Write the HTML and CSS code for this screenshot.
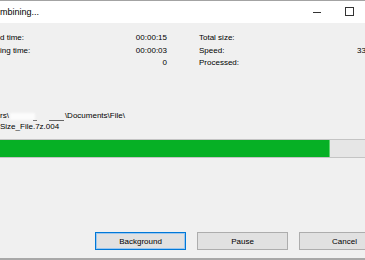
FILE: index.html
```html
<!DOCTYPE html>
<html lang="en">
<head>
    <meta charset="UTF-8">
    <meta name="viewport" content="width=device-width, initial-scale=1.0">
    <title>Combining...</title>
    <link rel="stylesheet" href="styles.css">
</head>
<body>
    <div class="window">
        <div class="titlebar">
            <span class="title">mbining...</span>
            <div class="controls">
                <span class="min"></span>
                <span class="max"></span>
            </div>
        </div>

        <div class="content">
            <div class="stats">
                <span>d time:</span>
                <span class="value">00:00:15</span>
                <span></span>
                <span>Total size:</span>
                <span></span>

                <span>ing time:</span>
                <span class="value">00:00:03</span>
                <span></span>
                <span>Speed:</span>
                <span>33</span>

                <span></span>
                <span class="value">0</span>
                <span></span>
                <span>Processed:</span>
                <span></span>
            </div>

            <div class="path">
                <div>rs\<span class="redact"><span class="blur"></span><span class="lines"></span></span>\Documents\File\</div>
                <div>Size_File.7z.004</div>
            </div>

            <div class="progress">
                <div class="fill"></div>
            </div>

            <div class="buttons">
                <button class="btn default">Background</button>
                <button class="btn">Pause</button>
                <button class="btn">Cancel</button>
            </div>
        </div>
    </div>
</body>
</html>
```

FILE: styles.css
```css
html, body {
    margin: 0;
    padding: 0;
}
body {
    width: 365px;
    height: 260px;
    overflow: hidden;
    font-family: "Liberation Sans", Arial, sans-serif;
    font-size: 8px;
    color: #000;
    background-color: #f0f0f0;
}
.window {
    border-top: 1px solid #a3a3a3;
    height: 259px;
    display: flex;
    flex-direction: column;
}
.titlebar {
    height: 22px;
    background-color: #fff;
    display: flex;
    align-items: center;
}
.title {
    flex: 1;
    font-size: 9px;
}
.controls {
    display: flex;
    align-items: center;
    gap: 24px;
    margin-right: 11px;
}
.min {
    width: 8px;
    height: 1px;
    background-color: #333;
}
.max {
    width: 7px;
    height: 7px;
    border: 1px solid #333;
    margin-bottom: 1px;
}
.content {
    flex: 1;
    background-color: #f0f0f0;
    border-bottom: 2px solid #a8a8a8;
    display: flex;
    flex-direction: column;
    overflow: hidden;
}
.stats {
    display: grid;
    grid-template-columns: 120px 47px 32px 158px 8px;
    line-height: 12.5px;
    padding-top: 9px;
    white-space: nowrap;
}
.stats .value {
    text-align: right;
}
.path {
    margin-top: 41px;
    line-height: 10.5px;
    white-space: nowrap;
}
.redact {
    display: inline-block;
    width: 56px;
    height: 9px;
    vertical-align: -2px;
    position: relative;
}
.blur {
    display: inline-block;
    width: 25px;
    height: 7px;
    margin-left: 1px;
    background-color: #fcfcfc;
    filter: blur(1px);
}
.lines {
    position: absolute;
    left: 24px;
    right: 0;
    bottom: 1px;
    height: 1px;
    background: linear-gradient(to right, #777 0, #777 4px, transparent 4px, transparent 16px, #666 16px, #666 31px, transparent 31px);
}
.progress {
    margin-top: 7px;
    height: 17px;
    border-top: 1px solid #c4c4c4;
    border-bottom: 1px solid #c4c4c4;
    background-color: #e6e6e6;
    display: flex;
}
.fill {
    width: 329px;
    background-color: #06b025;
    border-right: 1px solid #5fd46f;
}
.buttons {
    margin-top: auto;
    margin-bottom: 8px;
    display: flex;
    gap: 11px;
    padding-left: 95px;
    overflow: hidden;
}
.btn {
    flex: none;
    width: 91px;
    height: 18px;
    padding: 0;
    font-family: inherit;
    font-size: 8px;
    color: #000;
    background-color: #e1e1e1;
    border: 1px solid #adadad;
    border-radius: 0;
}
.btn.default {
    border-color: #0078d7;
    box-shadow: inset 0 0 0 1px #9cc6ee;
}
```
